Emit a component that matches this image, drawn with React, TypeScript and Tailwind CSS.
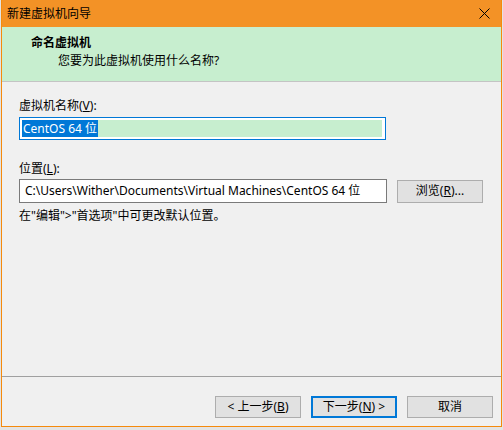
import React from "react";

const font = { fontFamily: '"Noto Sans", "Noto Sans CJK SC", sans-serif' };

function Btn({ children, primary }: { children: React.ReactNode; primary?: boolean }) {
  return (
    <button
      className={
        "w-[86px] h-[22px] bg-[#e1e1e1] text-[12px] leading-none text-black flex items-center justify-center " +
        (primary ? "border-2 border-[#0078d7]" : "border border-[#adadad]")
      }
    >
      {children}
    </button>
  );
}

export default function App() {
  return (
    <div className="w-[503px] h-[430px] bg-[#e3e3e3] pl-px" style={font}>
      <div className="w-[501px] h-[427px] border border-t-0 border-[#f58a0c] bg-[#f0f0f0] flex flex-col">
        {/* title bar */}
        <div className="h-[27px] bg-[#f39226] flex items-center justify-between pl-[5px] pr-[10px]">
          <span className="text-[12px] text-black">新建虚拟机向导</span>
          <svg width="11" height="11" viewBox="0 0 11 11" className="mr-[1px]">
            <path d="M0.5 0.5 L10.5 10.5 M10.5 0.5 L0.5 10.5" stroke="#000" strokeWidth="1" />
          </svg>
        </div>

        {/* header */}
        <div className="h-[55px] bg-[#c7eecf] border-b border-[#c4c4c4] pl-[29px] pt-[8px]">
          <div className="text-[12px] font-bold text-black leading-[16px]">命名虚拟机</div>
          <div className="text-[12px] text-black leading-[16px] pl-[27px] mt-[2px]">
            您要为此虚拟机使用什么名称?
          </div>
        </div>

        {/* body */}
        <div className="flex-1 pl-[17px] pt-[16px]">
          <div className="text-[12px] text-black leading-[16px]">
            虚拟机名称(<span className="underline">V</span>):
          </div>
          <div className="mt-[3px] w-[367px] h-[23px] border border-[#0078d7] bg-white p-[2px] flex">
            <span className="bg-[#0078d7] text-white text-[12px] leading-[17px] pl-[1px] pr-[1px]">
              CentOS 64 位
            </span>
            <span className="flex-1 bg-[#c7eecf] mr-[1px]" />
          </div>

          <div className="mt-[21px] text-[12px] text-black leading-[16px]">
            位置(<span className="underline">L</span>):
          </div>
          <div className="mt-[2px] flex items-center">
            <div className="w-[368px] h-[24px] border border-[#7a7a7a] bg-white flex items-center pl-[5px] text-[12px] text-black">
              C:\Users\Wither\Documents\Virtual Machines\CentOS 64 位
            </div>
            <div className="ml-[10px]">
              <button className="w-[86px] h-[23px] bg-[#e1e1e1] border border-[#adadad] text-[12px] text-black flex items-center justify-center">
                浏览(<span className="underline">R</span>)...
              </button>
            </div>
          </div>
          <div className="mt-[5px] text-[12px] text-black leading-[16px]">
            在"编辑"&gt;"首选项"中可更改默认位置。
          </div>
        </div>

        {/* footer */}
        <div className="border-t border-[#a0a0a0] h-[50px] flex items-start justify-end gap-[10px] pr-[8px] pt-[19px]">
          <Btn>
            &lt; 上一步(<span className="underline">B</span>)
          </Btn>
          <Btn primary>
            下一步(<span className="underline">N</span>) &gt;
          </Btn>
          <Btn>取消</Btn>
        </div>
      </div>
    </div>
  );
}
